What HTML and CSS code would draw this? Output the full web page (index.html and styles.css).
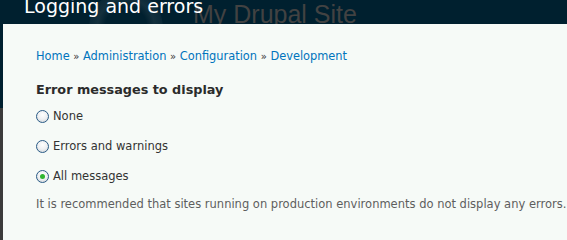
FILE: index.html
```html
<!DOCTYPE html>
<html>
<head>
<meta charset="utf-8">
<link rel="stylesheet" href="styles.css">
</head>
<body>
<header class="header">
  <div class="glow"></div>
  <div class="site-name">My Drupal Site</div>
  <h1 class="title">Logging and errors</h1>
</header>
<main class="panel">
  <nav class="breadcrumb">
    <a href="#">Home</a> <span class="sep">»</span> <a href="#">Administration</a> <span class="sep">»</span> <a href="#">Configuration</a> <span class="sep">»</span> <a href="#">Development</a>
  </nav>
  <fieldset class="group">
    <div class="group-label">Error messages to display</div>
    <label class="option"><span class="radio"></span>None</label>
    <label class="option"><span class="radio"></span>Errors and warnings</label>
    <label class="option"><span class="radio checked"></span>All messages</label>
    <p class="description">It is recommended that sites running on production environments do not display any errors.</p>
  </fieldset>
</main>
</body>
</html>
```

FILE: styles.css
```css
html {
  background: #3b3b3b;
}
html, body {
  margin: 0;
  padding: 0;
}
body {
  min-height: 100vh;
  background: linear-gradient(to bottom, #00202f 0, #00202f 108px, #3b3b3b 108px);
  font-family: "DejaVu Sans", Verdana, sans-serif;
  overflow: hidden;
}
.header {
  position: relative;
  height: 24px;
  background: #00202f;
  overflow: hidden;
}
.glow {
  position: absolute;
  left: 88px;
  top: -8px;
  width: 76px;
  height: 70px;
  border-radius: 50%;
  background: radial-gradient(circle at 50% 50%, #00202f 0, #00202f 40%, #14303d 55%, #0b2938 70%, #00202f 72%);
}
.site-name {
  position: absolute;
  left: 193px;
  top: -1px;
  font-family: "Liberation Sans", Arial, sans-serif;
  font-size: 25px;
  line-height: 30px;
  color: #424242;
  white-space: nowrap;
}
.title {
  position: relative;
  margin: 0;
  margin-top: -3px;
  padding-left: 24px;
  font-weight: normal;
  font-size: 19px;
  line-height: 19px;
  color: #ffffff;
  white-space: nowrap;
}
.panel {
  display: block;
  margin-left: 3px;
  min-height: calc(100vh - 24px);
  background: #f6faf7;
  padding: 0 0 0 33px;
  color: #333;
}
.breadcrumb {
  padding-top: 24px;
  font-size: 11.4px;
  line-height: 16px;
  color: #333;
}
.breadcrumb a {
  color: #0074bd;
  text-decoration: none;
}
.breadcrumb .sep {
  font-size: 10px;
}
.group {
  border: 0;
  margin: 0;
  padding: 0;
  padding-top: 17px;
}
.group-label {
  font-weight: bold;
  font-size: 12.8px;
  line-height: 16px;
  color: #2b2b2b;
  margin-bottom: 3px;
}
.option {
  display: flex;
  align-items: center;
  gap: 4px;
  font-size: 11.5px;
  line-height: 18px;
  height: 30px;
  color: #333;
  white-space: nowrap;
}
.radio {
  box-sizing: border-box;
  width: 13px;
  height: 13px;
  border-radius: 50%;
  border: 1px solid #2a5b86;
  background: radial-gradient(circle at 50% 35%, #ffffff 0, #eef0f2 50%, #c9ced3 100%);
  display: flex;
  align-items: center;
  justify-content: center;
}
.radio.checked::after {
  content: "";
  width: 5px;
  height: 5px;
  border-radius: 50%;
  background: #2fb52f;
}
.description {
  margin: 5px 0 0 0;
  font-size: 11.5px;
  line-height: 16px;
  color: #5e5e5e;
  white-space: nowrap;
}
```
